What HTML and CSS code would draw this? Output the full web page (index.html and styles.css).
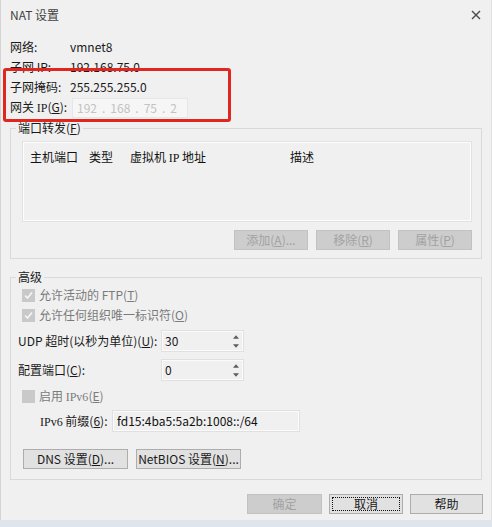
FILE: index.html
```html
<!DOCTYPE html>
<html lang="zh-CN">
<head>
<meta charset="utf-8">
<title>NAT 设置</title>
<link rel="stylesheet" href="styles.css">
</head>
<body>
<div class="window">
  <div class="titlebar">
    <span class="title">NAT 设置</span>
    <svg class="close" viewBox="0 0 10 10"><path d="M1 1L9 9M9 1L1 9"/></svg>
  </div>

  <div class="info">
    <span>网络:</span><span>vmnet8</span>
    <span>子网 IP:</span><span>192.168.75.0</span>
    <span>子网掩码:</span><span>255.255.255.0</span>
    <span>网关 <span class="serif">IP</span>(<u>G</u>):</span>
    <span class="ipbox"><span>192</span><span>.</span><span>168</span><span>.</span><span>75</span><span>.</span><span>2</span></span>
  </div>
  <div class="highlight"></div>

  <fieldset class="group group-ports">
    <legend>端口转发(<u>F</u>)</legend>
    <div class="list">
      <span class="c1">主机端口</span>
      <span class="c2">类型</span>
      <span class="c3">虚拟机 <span class="serif">IP</span> 地址</span>
      <span class="c4">描述</span>
    </div>
    <div class="btn-row">
      <button class="btn" disabled>添加(<u>A</u>)...</button>
      <button class="btn" disabled>移除(<u>R</u>)</button>
      <button class="btn" disabled>属性(<u>P</u>)</button>
    </div>
  </fieldset>

  <fieldset class="group group-adv">
    <legend>高级</legend>
    <div class="check-row">
      <svg class="cb" viewBox="0 0 13 13"><rect width="13" height="13" fill="#c9c9c9"/><path d="M3 6.5L5.5 9L10 3.5" fill="none" stroke="#f6f6f6" stroke-width="1.6"/></svg>
      <span>允许活动的 FTP(<u>T</u>)</span>
    </div>
    <div class="check-row">
      <svg class="cb" viewBox="0 0 13 13"><rect width="13" height="13" fill="#c9c9c9"/><path d="M3 6.5L5.5 9L10 3.5" fill="none" stroke="#f6f6f6" stroke-width="1.6"/></svg>
      <span>允许任何组织唯一标识符(<u>O</u>)</span>
    </div>
    <div class="field-row row-udp">
      <label class="lbl-wide">UDP 超时(以秒为单位)(<u>U</u>):</label>
      <div class="spin"><span class="spin-val">30</span>
        <span class="arrows">
          <svg viewBox="0 0 7 4"><path d="M0 4L3.5 0L7 4Z"/></svg>
          <svg viewBox="0 0 7 4"><path d="M0 0L3.5 4L7 0Z"/></svg>
        </span>
      </div>
    </div>
    <div class="field-row row-port">
      <label class="lbl-wide">配置端口(<u>C</u>):</label>
      <div class="spin"><span class="spin-val">0</span>
        <span class="arrows">
          <svg viewBox="0 0 7 4"><path d="M0 4L3.5 0L7 4Z"/></svg>
          <svg viewBox="0 0 7 4"><path d="M0 0L3.5 4L7 0Z"/></svg>
        </span>
      </div>
    </div>
    <div class="check-row row-ipv6">
      <svg class="cb" viewBox="0 0 13 13"><rect width="13" height="13" fill="#c9c9c9"/></svg>
      <span>启用 <span class="serif">IPv6</span>(<u>E</u>)</span>
    </div>
    <div class="field-row row-prefix">
      <label class="lbl-prefix"><span class="serif">IPv6</span> 前缀(<u>6</u>):</label>
      <div class="textbox">fd15:4ba5:5a2b:1008::/64</div>
    </div>
    <div class="dns-row">
      <button class="btn btn-wide">DNS 设置(<u>D</u>)...</button>
      <button class="btn btn-wide">NetBIOS 设置(<u>N</u>)...</button>
    </div>
  </fieldset>

  <div class="footer-btns">
    <button class="btn b-ok" disabled>确定</button>
    <button class="btn b-cancel">取消</button>
    <button class="btn b-help">帮助</button>
  </div>
  <div class="bottom-strip"></div>
</div>
</body>
</html>
```

FILE: styles.css
```css
* { box-sizing: border-box; }
html, body { margin: 0; padding: 0; }
body {
  background: #f0f0f0;
  font-family: "Noto Sans CJK SC", "Microsoft YaHei", sans-serif;
  font-size: 12px;
  line-height: 16px;
  color: #1a1a1a;
}
u { text-decoration: underline; text-underline-offset: 1px; }
.serif { font-family: "Liberation Serif", "Noto Sans CJK SC", serif; }

.window {
  position: relative;
  width: 492px;
  height: 527px;
  background: #f0f0f0;
  overflow: hidden;
  display: flex;
  flex-direction: column;
  box-shadow: inset 1px 0 0 #d4d4d4, inset -1px 0 0 #e2e2e2;
}

.titlebar {
  height: 30px;
  flex: none;
  display: flex;
  align-items: center;
  justify-content: space-between;
  padding: 0 11px 0 10px;
}
.title { color: #3f3f3f; }
.close { width: 10px; height: 10px; stroke: #4a4a4a; stroke-width: 1.4; fill: none; }

.info {
  display: grid;
  grid-template-columns: 60px auto;
  grid-template-rows: 18px 19px 19px 21px;
  row-gap: 1px;
  margin: 8px 0 0 10px;
  align-items: center;
  justify-content: start;
  flex: none;
}
.ipbox {
  margin-left: 2px;
  width: 116px;
  height: 20px;
  background: #f6f6f6;
  border: 1px solid #e6e6e6;
  color: #c2c2c2;
  display: flex;
  align-items: center;
  padding-left: 4px;
  gap: 5px;
}

.highlight {
  position: absolute;
  left: 3px;
  top: 68px;
  width: 228px;
  height: 54px;
  border: 3px solid #e0271f;
  border-radius: 3px;
}

.group {
  margin: 0 10px;
  border: 1px solid #d9d9d9;
  padding: 0 9px 0 7px;
  min-width: 0;
  flex: none;
}
.group legend {
  padding: 0 2px;
  margin-left: -2px;
  height: 16px;
  line-height: 16px;
  color: #1a1a1a;
}

.group-ports { margin-top: 2px; padding-top: 5px; padding-bottom: 8px; }
.list {
  margin-left: 4px;
  height: 81px;
  border: 1px solid #e2e2e2;
  box-shadow: inset 0 0 0 1px #fcfcfc;
  display: flex;
  align-items: flex-start;
  padding: 7px 0 0 7px;
  color: #111;
}
.c1 { width: 59px; }
.c2 { width: 41px; }
.c3 { width: 160px; }

.btn-row {
  display: flex;
  justify-content: flex-end;
  gap: 8px;
  margin-top: 8px;
}

.btn {
  height: 20px;
  width: 74px;
  padding: 0;
  font: inherit;
  font-size: 12px;
  line-height: 18px;
  background: #e1e1e1;
  border: 1px solid #adadad;
  color: #1a1a1a;
  border-radius: 0;
}
.btn:disabled {
  background: #cdcdcd;
  border-color: #c2c2c2;
  color: #a2a2a2;
}

.group-adv { margin-top: 10px; padding-bottom: 10px; }
.check-row {
  height: 20px;
  display: flex;
  align-items: center;
  gap: 4px;
  margin-left: 4px;
  color: #7b7b7b;
}
.cb { width: 13px; height: 13px; flex: none; }

.field-row { display: flex; align-items: center; height: 22px; }
.row-udp { margin-top: 5px; }
.row-port { margin-top: 7px; }
.row-ipv6 { margin-top: 5px; }
.row-prefix { margin-top: 4px; }
.lbl-wide { width: 143px; }
.lbl-prefix { width: 72px; margin-left: 22px; }

.spin {
  width: 83px;
  height: 22px;
  border: 1px solid #e0e0e0;
  box-shadow: inset 0 0 0 1px #fbfbfb;
  display: flex;
  align-items: center;
  justify-content: space-between;
  padding: 0 4px 0 3px;
}
.arrows {
  display: flex;
  flex-direction: column;
  gap: 5px;
}
.arrows svg { width: 6px; height: 4px; fill: #5c5c5c; display: block; }

.textbox {
  width: 188px;
  height: 22px;
  border: 1px solid #e0e0e0;
  box-shadow: inset 0 0 0 1px #fbfbfb;
  padding-left: 4px;
  display: flex;
  align-items: center;
  color: #111;
}

.dns-row {
  margin-top: 17px;
  margin-left: 5px;
  display: flex;
  gap: 8px;
}
.btn-wide { width: 105px; }

.footer-btns {
  margin-top: 14px;
  padding-right: 9px;
  display: flex;
  justify-content: flex-end;
  gap: 7px;
  flex: none;
}
.b-ok { width: 75px; }
.b-cancel { width: 74px; outline: 1px dotted #111; outline-offset: -4px; }
.b-help { width: 73px; }

.bottom-strip {
  margin-top: auto;
  height: 7px;
  background: #dfe5ec;
  flex: none;
}
```
